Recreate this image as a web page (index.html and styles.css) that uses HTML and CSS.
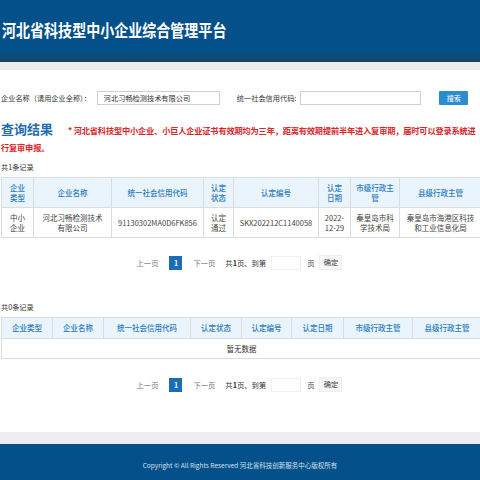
FILE: index.html
```html
<!DOCTYPE html>
<html lang="zh-CN">
<head>
<meta charset="utf-8">
<title>河北省科技型中小企业综合管理平台</title>
<link rel="stylesheet" href="styles.css">
</head>
<body>
<header class="top">
  <div class="top-main"><h1 class="brand">河北省科技型中小企业综合管理平台</h1></div>
  <div class="top-strip"></div>
</header>
<div class="band"></div>
<main class="content">
  <div class="search">
    <span class="lbl">企业名称（请用企业全称）：</span>
    <div class="inp inp1">河北习畅检测技术有限公司</div>
    <span class="lbl lbl2">统一社会信用代码:</span>
    <div class="inp inp2"></div>
    <button class="btn">搜索</button>
  </div>
  <p class="result"><span class="result-title">查询结果</span><span class="note">* 河北省科技型中小企业、小巨人企业证书有效期均为三年，距离有效期提前半年进入复审期，届时可以登录系统进行复审申报。</span></p>
  <div class="count">共1条记录</div>
  <table class="grid grid1">
    <colgroup>
      <col style="width:32px"><col style="width:78px"><col style="width:92px"><col style="width:30px"><col style="width:85px"><col style="width:32px"><col style="width:49px"><col style="width:82px">
    </colgroup>
    <thead>
      <tr><th>企业类型</th><th>企业名称</th><th>统一社会信用代码</th><th>认定状态</th><th>认定编号</th><th>认定日期</th><th>市级行政主管</th><th>县级行政主管</th></tr>
    </thead>
    <tbody>
      <tr><td>中小企业</td><td class="wide">河北习畅检测技术有限公司</td><td>91130302MA0D6FK856</td><td>认定通过</td><td>SKX202212C1140058</td><td>2022-12-29</td><td>秦皇岛市科学技术局</td><td>秦皇岛市海港区科技和工业信息化局</td></tr>
    </tbody>
  </table>
  <div class="pager pager1">
    <span class="pg-link">上一页</span>
    <span class="pg-cur">1</span>
    <span class="pg-link">下一页</span>
    <span class="pg-total">共<b>1</b>页、到第</span>
    <span class="pg-input"></span>
    <span class="pg-unit">页</span>
    <span class="pg-go">确定</span>
  </div>
  <div class="count count2">共0条记录</div>
  <table class="grid grid2">
    <colgroup>
      <col style="width:51px"><col style="width:51px"><col style="width:87px"><col style="width:51px"><col style="width:50px"><col style="width:52px"><col style="width:69px"><col style="width:69px">
    </colgroup>
    <thead>
      <tr><th>企业类型</th><th>企业名称</th><th>统一社会信用代码</th><th>认定状态</th><th>认定编号</th><th>认定日期</th><th>市级行政主管</th><th>县级行政主管</th></tr>
    </thead>
    <tbody>
      <tr><td colspan="8" class="empty">暂无数据</td></tr>
    </tbody>
  </table>
  <div class="pager pager2">
    <span class="pg-link">上一页</span>
    <span class="pg-cur">1</span>
    <span class="pg-link">下一页</span>
    <span class="pg-total">共<b>1</b>页、到第</span>
    <span class="pg-input"></span>
    <span class="pg-unit">页</span>
    <span class="pg-go">确定</span>
  </div>
</main>
<div class="band band-foot"></div>
<footer class="foot">Copyright © All Rights Reserved 河北省科技创新服务中心版权所有</footer>
</body>
</html>
```
FILE: styles.css
```css
html, body {
  margin: 0;
  padding: 0;
  background: #fff;
}
body {
  width: 480px;
  height: 480px;
  overflow: hidden;
  font-family: "Noto Sans CJK SC", "Noto Sans", sans-serif;
  color: #333;
}
.top-main {
  height: 53px;
  background: #03508a;
  display: flex;
  align-items: center;
  padding-left: 2px;
}
.brand {
  margin: 0;
  font-size: 16.5px;
  line-height: 1;
  font-weight: 700;
  color: #fff;
  white-space: nowrap;
  transform: scaleX(0.85);
  transform-origin: left center;
  padding-top: 7px;
}
.top-strip {
  height: 7px;
  background: #0d4b78;
  border-bottom: 2px solid #173f5e;
}
.band {
  height: 8px;
  background: #ebebed;
}
.content {
  padding-left: 1px;
}
.search {
  display: flex;
  align-items: center;
  height: 14px;
  margin-top: 21px;
}
.lbl {
  font-size: 7.2px;
  color: #333;
  white-space: nowrap;
}
.inp {
  box-sizing: border-box;
  height: 14px;
  border: 1px solid #cfcfcf;
  font-size: 7.2px;
  line-height: 12px;
  padding-left: 6px;
  color: #333;
  white-space: nowrap;
}
.inp1 {
  width: 123px;
  margin-left: 6px;
}
.lbl2 {
  margin-left: 17px;
}
.inp2 {
  width: 121px;
  margin-left: 4px;
}
.btn {
  margin-left: 18px;
  width: 29px;
  height: 14px;
  padding: 0;
  border: none;
  border-radius: 1px;
  background: #2b8dd0;
  color: #fff;
  font-family: inherit;
  font-size: 7px;
  line-height: 14px;
}
.result {
  margin: 15px 0 0;
  line-height: 17px;
  font-size: 8.2px;
}
.result-title {
  font-size: 13px;
  line-height: 17px;
  font-weight: 700;
  color: #1f6db1;
}
.note {
  margin-left: 15px;
  color: #d9262b;
  font-weight: 700;
  font-size: 8.2px;
  letter-spacing: -0.15px;
}
.count {
  margin-top: 6px;
  font-size: 7.2px;
  line-height: 10px;
  color: #333;
}
.count2 {
  margin-top: 32px;
}
.grid {
  margin-top: 5px;
  width: 480px;
  border-collapse: collapse;
  table-layout: fixed;
  font-size: 7.5px;
  line-height: 10px;
}
.grid th, .grid td {
  border: 1px solid #dcdcdc;
  text-align: center;
  padding: 4.5px 5px;
  word-break: break-all;
}
.grid th {
  background: #eaf4fc;
  color: #2b7bbd;
  font-weight: 500;
}
.grid td {
  color: #444;
}
.grid1 td.wide {
  padding-left: 7px;
  padding-right: 7px;
}
.grid1 td:nth-child(3), .grid1 td:nth-child(5), .grid1 td:nth-child(6) {
  word-break: normal;
  padding-left: 2px;
  padding-right: 2px;
}
.grid2 th {
  padding: 5px 2px;
  white-space: nowrap;
}
.grid2 td.empty {
  padding: 4.5px 0;
  color: #333;
}
.pager {
  display: flex;
  justify-content: center;
  align-items: center;
  height: 15px;
  font-size: 7.3px;
  margin-top: 17px;
  padding-right: 2px;
}
.pager2 {
  margin-top: 18px;
}
.pg-link {
  color: #777;
}
.pg-cur {
  box-sizing: border-box;
  width: 13px;
  height: 14px;
  margin: 0 11px;
  background: #1c6db5;
  color: #fff;
  font-weight: 700;
  text-align: center;
  line-height: 14px;
  font-size: 7px;
}
.pg-total {
  margin-left: 10px;
  color: #333;
}
.pg-total b {
  font-weight: 700;
}
.pg-input {
  box-sizing: border-box;
  width: 30px;
  height: 14px;
  margin-left: 5px;
  border: 1px solid #f0f0f0;
}
.pg-unit {
  margin-left: 6px;
  color: #444;
}
.pg-go {
  box-sizing: border-box;
  margin-left: 5px;
  width: 23px;
  height: 15px;
  line-height: 13px;
  text-align: center;
  background: #f6f6f6;
  border: 1px solid #eee;
  color: #444;
}
.band-foot {
  margin-top: 40px;
  height: 12px;
  background: #eeeef2;
}
.foot {
  height: 45px;
  box-sizing: border-box;
  padding-top: 16px;
  background: #03508a;
  color: #d6e3ee;
  text-align: center;
  font-size: 6.5px;
  line-height: 10px;
}
```
